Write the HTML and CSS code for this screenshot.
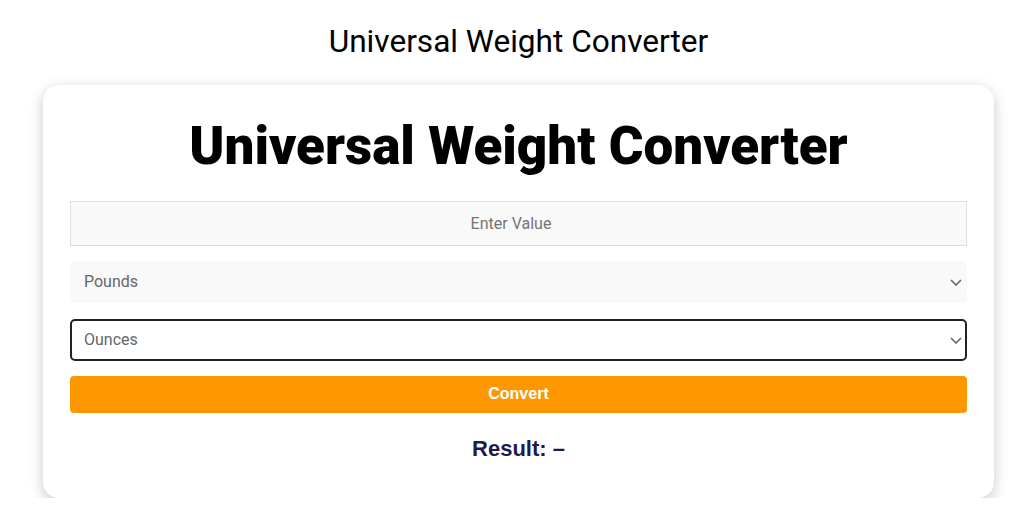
FILE: index.html
```html
<!DOCTYPE html>
<html lang="en">
<head>
  <meta charset="UTF-8">
  <meta name="viewport" content="width=device-width, initial-scale=1.0">
  <title>Universal Weight Converter</title>
  <link rel="stylesheet" href="styles.css">
</head>
<body>
  <h2 class="page-title">Universal Weight Converter</h2>

  <div class="container">
    <h1>Universal Weight Converter</h1>

    <input type="number" id="value" class="value-input" placeholder="Enter Value">

    <div class="select-wrap">
      <select id="from-unit" class="unit-select">
        <option value="lb">Pounds</option>
        <option value="kg">Kilograms</option>
        <option value="g">Grams</option>
        <option value="oz">Ounces</option>
      </select>
      <svg class="chevron" width="12" height="7" viewBox="0 0 12 7"><path d="M1 1l5 5 5-5" fill="none" stroke="#666" stroke-width="1.6"/></svg>
    </div>

    <div class="select-wrap to-wrap">
      <select id="to-unit" class="unit-select active">
        <option value="oz">Ounces</option>
        <option value="lb">Pounds</option>
        <option value="kg">Kilograms</option>
        <option value="g">Grams</option>
      </select>
      <svg class="chevron" width="12" height="7" viewBox="0 0 12 7"><path d="M1 1l5 5 5-5" fill="none" stroke="#666" stroke-width="1.6"/></svg>
    </div>

    <button class="convert-btn" onclick="convertWeight()">Convert</button>

    <p id="result" class="result">Result: &ndash;</p>
  </div>
<script>
function convertWeight() {
    const value = parseFloat(document.getElementById("value").value);
    const from = document.getElementById("from-unit").value;
    const to = document.getElementById("to-unit").value;
    const resultElement = document.getElementById("result");

    if (isNaN(value)) {
      resultElement.innerHTML = "Result: &ndash;";
      return;
    }

    // everything goes through grams
    const grams = { lb: 453.59237, kg: 1000, g: 1, oz: 28.349523125 };
    const converted = value * grams[from] / grams[to];

    resultElement.innerHTML = "Result: " + converted.toFixed(4);
  }
</script>
</body>
</html>
```

FILE: styles.css
```css
body {
  font-family: Roboto, Arial, sans-serif;
  background-color: #fff;
  margin: 0;
  padding: 23px 30px 0 43px;
}

.page-title {
  font-size: 31.6px;
  font-weight: 400;
  text-align: center;
  margin: 0 0 24px;
  line-height: 38px;
}

.container {
  display: flex;
  flex-direction: column;
  gap: 15px;
  padding: 30px 27px 36px;
  background-color: #fff;
  border-radius: 16px;
  box-shadow: 0 4px 14px rgba(0, 0, 0, 0.22);
}

h1 {
  font-size: 53px;
  font-weight: 900;
  text-align: center;
  margin: 0 0 7px;
  line-height: 1.2;
}

.value-input {
  height: 45px;
  box-sizing: border-box;
  padding: 10px;
  font-family: Roboto, sans-serif;
  font-size: 16px;
  text-align: center;
  background-color: #f9f9f9;
  border: 1px solid #ddd;
  border-radius: 0;
}

.value-input::placeholder {
  color: #757575;
}

.select-wrap {
  position: relative;
  display: flex;
  flex-direction: column;
}

.to-wrap {
  margin-top: 1px;
}

.unit-select {
  appearance: none;
  height: 42px;
  padding: 0 13px;
  font-family: Roboto, sans-serif;
  font-size: 16px;
  color: #666;
  background-color: #f9f9f9;
  border: 1px solid #f9f9f9;
  border-radius: 4px;
}

.unit-select.active {
  padding: 0 12px;
  background-color: #fff;
  border: 2px solid #222;
  border-radius: 5px;
}

.chevron {
  position: absolute;
  right: 5px;
  top: 50%;
  margin-top: -3px;
  pointer-events: none;
}

.convert-btn {
  height: 37px;
  font-family: "Liberation Sans", Arial, sans-serif;
  font-size: 16px;
  font-weight: bold;
  color: #fff;
  background-color: #ff9800;
  border: none;
  border-radius: 4px;
  cursor: pointer;
}

.convert-btn:hover {
  background-color: #f08c00;
}

.result {
  margin: 8px 0 0;
  font-family: "Liberation Sans", Arial, sans-serif;
  font-size: 22px;
  font-weight: bold;
  text-align: center;
  color: #1e1a4a;
}
```
